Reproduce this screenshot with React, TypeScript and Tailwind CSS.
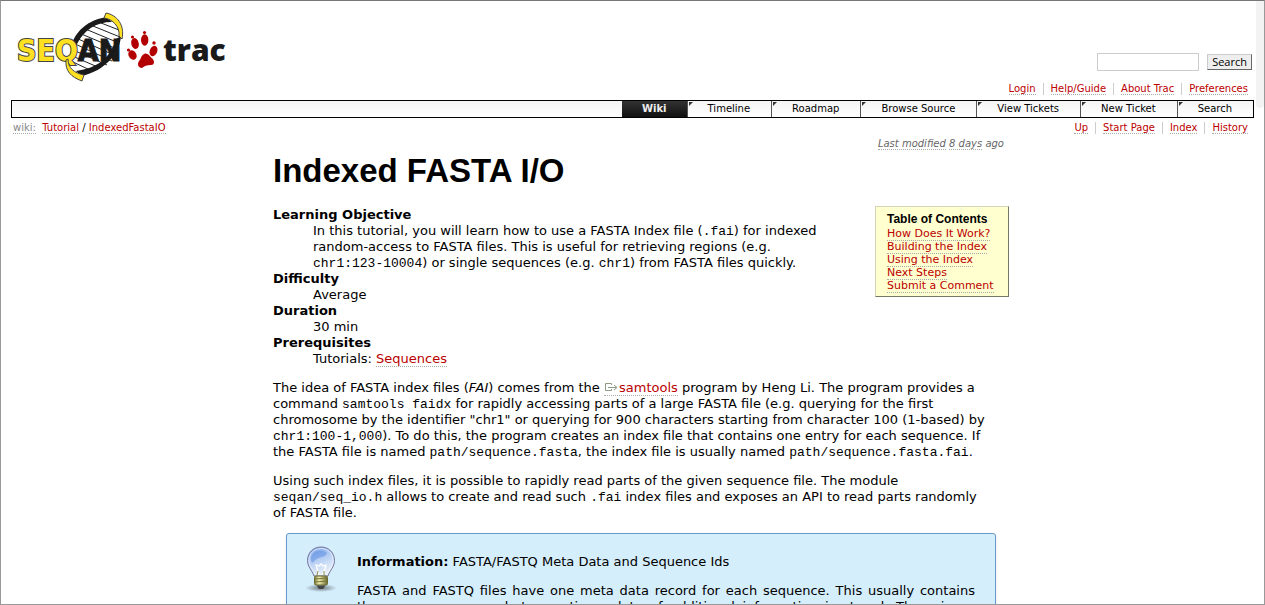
import React from "react";

type Kids = { children: React.ReactNode };

function A({ children }: Kids) {
  return (
    <a href="#" className="border-b border-dotted border-[#aaaaaa] text-[#bb0000]">
      {children}
    </a>
  );
}

function Code({ children }: Kids) {
  return <code className="font-['Liberation_Mono',monospace] text-[13px] leading-3">{children}</code>;
}

function Logo() {
  return (
    <svg viewBox="17 10 210 74" className="h-[74px] w-[210px]" role="img" aria-label="SeqAn trac">
      <path d="M71 47C76 30 88 20 108 17L120 28C122 48 112 70 83 75L72 66Z" fill="#fff" />
      <path
        d="M96 21L119 30M88 24L120 37M83 28L119 43M79 33L117 49M76 38L116 56M73 43L112 61M71 49L107 65M70 55L100 68M71 61L92 71"
        stroke="#222"
        strokeWidth="1"
      />
      <path d="M71 46C75 32 87 20 107 17L112 22C96 22 84 30 77 44Z" fill="#1a1a1a" />
      <path d="M121 36C120 52 106 71 81 76L76 71C98 68 110 58 116 39Z" fill="#1a1a1a" />
      <path d="M106 13C117 15 125 25 122 39L119 36C120 27 113 19 104 18Z" fill="#fde021" stroke="#444" strokeWidth="1" />
      <text x="17" y="61" fontFamily="DejaVu Sans Condensed, DejaVu Sans" fontWeight="700" fontSize="30" fill="#1a1a1a">
        <tspan fill="#fde021" stroke="#444" strokeWidth="2" paintOrder="stroke">SEQ</tspan>
        <tspan stroke="#1a1a1a" strokeWidth="1">AN</tspan>
      </text>
      <path d="M68 59C68 68 74 73 84 75L82 81C71 77 65 71 66 60Z" fill="#fde021" stroke="#444" strokeWidth="1" />
      <g fill="#b30000">
        <ellipse cx="132.5" cy="55" rx="3.8" ry="5" transform="rotate(-35 132.5 55)" />
        <ellipse cx="135" cy="43.5" rx="3.7" ry="5.5" transform="rotate(-14 135 43.5)" />
        <ellipse cx="144.7" cy="40" rx="3.7" ry="5.8" />
        <ellipse cx="153.5" cy="51" rx="3.7" ry="5.4" transform="rotate(22 153.5 51)" />
        <circle cx="128.5" cy="50" r="1.6" />
        <circle cx="132.5" cy="37" r="1.6" />
        <circle cx="144.5" cy="32.5" r="1.6" />
        <circle cx="154" cy="43" r="1.7" />
        <path d="M145 53.500C148 53 150 56 151 57.500C155 60 155 65 151 65C147 65 144 66 142 68C138 68 137 64 139 61C141 59 141 55 145 53.500Z" />
      </g>
      <text x="163" y="61" fontFamily="Open Sans" fontWeight="800" fontSize="30" fill="#1a1a1a">trac</text>
    </svg>
  );
}

function Bulb() {
  return (
    <svg viewBox="0 0 36 48" className="h-12 w-9 shrink-0" aria-hidden="true">
      <defs>
        <linearGradient id="glass" x1="0" y1="0" x2="0.4" y2="1">
          <stop offset="0" stopColor="#6f9de8" />
          <stop offset="0.5" stopColor="#b4cdf4" />
          <stop offset="1" stopColor="#e9f0f8" />
        </linearGradient>
        <linearGradient id="brass">
          <stop offset="0" stopColor="#7c7a3a" />
          <stop offset="0.35" stopColor="#f0edac" />
          <stop offset="1" stopColor="#6b6930" />
        </linearGradient>
        <radialGradient id="shade">
          <stop offset="0" stopColor="#000" stopOpacity="0.5" />
          <stop offset="1" stopColor="#000" stopOpacity="0" />
        </radialGradient>
      </defs>
      <ellipse cx="18" cy="43" rx="16" ry="4" fill="url(#shade)" />
      <path d="M18 2C10 2 4.500 8 4.500 15.500C4.500 22 9 25 11 31H25C27 25 31.500 22 31.500 15.500C31.500 8 26 2 18 2Z" fill="url(#glass)" stroke="#77779a" />
      <path d="M18 3.500C11 3.500 6 8.500 6 15.500C6 21 10 24 12.500 29.500H23.500C26 24 30 21 30 15.500C30 8.500 25 3.500 18 3.500Z" fill="none" stroke="#eef4ff" strokeOpacity="0.8" />
      <path d="M8 15C8 8 14 5 20 6C26 7 24 11 19 12C13 13 11 17 9 18Z" fill="#5c8be0" opacity="0.5" />
      <path d="M16 30L13 20L16 21L18 19L20 21L23 20L20 30" fill="none" stroke="#fff" strokeWidth="1.300" />
      <path d="M14 30L15 26M21 30V26" stroke="#8a8a50" fill="none" />
      <rect x="11.500" y="31" width="13" height="9" rx="1.500" fill="url(#brass)" stroke="#6a692f" />
      <path d="M12 34L24 33M12 37L24 36" stroke="#77753a" />
      <path d="M13.500 40.500H22.500L20 44H16Z" fill="#444" />
    </svg>
  );
}

function LinkBar({ items }: { items: string[] }) {
  return (
    <ul className="flex justify-end text-[10px] leading-3">
      {items.map((t, i) => (
        <li key={t} className={i ? "ml-[7px] border-l border-[#cccccc] pl-[7px]" : ""}>
          <A>{t}</A>
        </li>
      ))}
    </ul>
  );
}

const tabs = ["Timeline", "Roadmap", "Browse Source", "View Tickets", "New Ticket", "Search"];
const toc = ["How Does It Work?", "Building the Index", "Using the Index", "Next Steps", "Submit a Comment"];

export default function App() {
  return (
    <div className="relative h-screen overflow-hidden border border-t-[#777777] border-r-[#999999] border-b-[#999999] border-l-[#999999] bg-white font-['DejaVu_Sans',sans-serif] text-[13px] leading-4 text-black">
      <div className="absolute top-0 right-0 h-[107px] w-2 rounded-b bg-[#f3f3f3]" />
      <header className="px-[10px]">
        <div className="flex items-end justify-between pt-[9px]">
          <a href="#" className="mb-4 ml-[6px]">
            <Logo />
          </a>
          <div className="flex flex-col items-end gap-3">
            <form className="mr-[2px] flex items-center gap-2" onSubmit={(e) => e.preventDefault()}>
              <input aria-label="Search" className="h-[18px] w-[102px] border border-[#cccccc] bg-white px-1 text-[11px]" />
              <button className="h-4 border border-t-[#cccccc] border-r-[#666666] border-b-[#666666] border-l-[#cccccc] bg-[#eeeeee] px-1 font-['Open_Sans',sans-serif] text-[11px] leading-[14px]">
                Search
              </button>
            </form>
            <div className="mr-[6px] pb-[5px]">
              <LinkBar items={["Login", "Help/Guide", "About Trac", "Preferences"]} />
            </div>
          </div>
        </div>
        <nav className="flex h-[18px] justify-end border border-black bg-linear-to-b from-[#f4f4f4] to-white text-[10px] leading-4">
          <a href="#" className="bg-linear-to-b from-[#333333] to-[#111111] px-5 font-bold text-[#eeeeee]">
            Wiki
          </a>
          {tabs.map((t) => (
            <a key={t} href="#" className="relative border-l border-[#555555] pr-[21px] pl-5">
              <svg viewBox="0 0 4 4" className="absolute top-px left-px size-1" aria-hidden="true">
                <path d="M0 0H4L0 4Z" fill="#333" />
              </svg>
              {t}
            </a>
          ))}
        </nav>
        <div className="mt-1 flex items-start justify-between pr-[6px] pl-[2px] text-[10px] leading-3">
          <div>
            <span className="border-b border-dotted border-[#aaaaaa] text-[#888888]">wiki:</span>&nbsp; <A>Tutorial</A> / <A>IndexedFastaIO</A>
          </div>
          <LinkBar items={["Up", "Start Page", "Index", "History"]} />
        </div>
      </header>
      <main className="pl-[17px]">
        <div className="mx-auto w-[736px]">
          <p className="mt-[2px] pr-[5px] text-right text-[10px] leading-4 text-[#666666] italic">
            <span className="border-b border-dotted border-[#aaaaaa]">Last modified</span>{" "}
            <span className="border-b border-dotted border-[#aaaaaa]">8 days</span> ago
          </p>
          <h1 className="font-['Liberation_Sans',sans-serif] text-[33px] leading-[38px] font-bold">Indexed FASTA I/O</h1>
          <nav className="float-right mt-4 w-[134px] border border-t-[#d4d4bb] border-r-[#777766] border-b-[#777766] border-l-[#d4d4bb] bg-[#ffffd0] pt-1 pb-1 pl-[11px] text-[11px] leading-[13px]">
            <h4 className="font-['Liberation_Sans',sans-serif] text-[12px] leading-4 font-bold">Table of Contents</h4>
            <ul>
              {toc.map((t) => (
                <li key={t} className="whitespace-nowrap">
                  <A>{t}</A>
                </li>
              ))}
            </ul>
          </nav>
          <dl className="pt-[17px]">
            <dt className="font-bold">Learning Objective</dt>
            <dd className="ml-10">
              In this tutorial, you will learn how to use a FASTA Index file (<Code>.fai</Code>) for indexed
              <br />
              random-access to FASTA files. This is useful for retrieving regions (e.g.
              <br />
              <Code>chr1:123-10004</Code>) or single sequences (e.g. <Code>chr1</Code>) from FASTA files quickly.
            </dd>
            <dt className="font-bold">Difficulty</dt>
            <dd className="ml-10">Average</dd>
            <dt className="font-bold">Duration</dt>
            <dd className="ml-10">30 min</dd>
            <dt className="font-bold">Prerequisites</dt>
            <dd className="ml-10">
              Tutorials: <A>Sequences</A>
            </dd>
          </dl>
          <p className="mt-[13px]">
            The idea of FASTA index files (<i>FAI</i>) comes from the{" "}
            <A>
              <svg viewBox="0 0 15 9" className="inline h-[9px] w-[15px] align-baseline" aria-hidden="true">
                <path d="M7.500 2V0.500H1.500V7.500H7.500V6M4 4.500H12.500M10 2L13 4.500L10 7" fill="none" stroke="#8c9c84" />
              </svg>
              samtools
            </A>{" "}
            program by Heng Li. The program provides a
            <br />
            command <Code>samtools faidx</Code> for rapidly accessing parts of a large FASTA file (e.g. querying for the first
            <br />
            chromosome by the identifier "chr1" or querying for 900 characters starting from character 100 (1-based) by
            <br />
            <Code>chr1:100-1,000</Code>). To do this, the program creates an index file that contains one entry for each sequence. If
            <br />
            the FASTA file is named <Code>path/sequence.fasta</Code>, the index file is usually named <Code>path/sequence.fasta.fai</Code>.
          </p>
          <p className="mt-[13px]">
            Using such index files, it is possible to rapidly read parts of the given sequence file. The module
            <br />
            <Code>seqan/seq_io.h</Code> allows to create and read such <Code>.fai</Code> index files and exposes an API to read parts randomly
            <br />
            of FASTA file.
          </p>
          <section className="mx-[13px] mt-3 flex gap-[18px] rounded-[3px] border border-[#6699cc] bg-[#d5eefc] px-4 pt-[11px] pb-4 shadow-sm">
            <Bulb />
            <div className="flex-1 pt-[9px] pr-1">
              <p>
                <b>Information:</b> FASTA/FASTQ Meta Data and Sequence Ids
              </p>
              <p className="mt-[13px] text-justify">
                FASTA and FASTQ files have one meta data record for each sequence. This usually contains
                the sequence name, but sometimes data of additional information is stored. There is an
                important difference between the meta data and the identifier.
              </p>
            </div>
          </section>
        </div>
      </main>
    </div>
  );
}
